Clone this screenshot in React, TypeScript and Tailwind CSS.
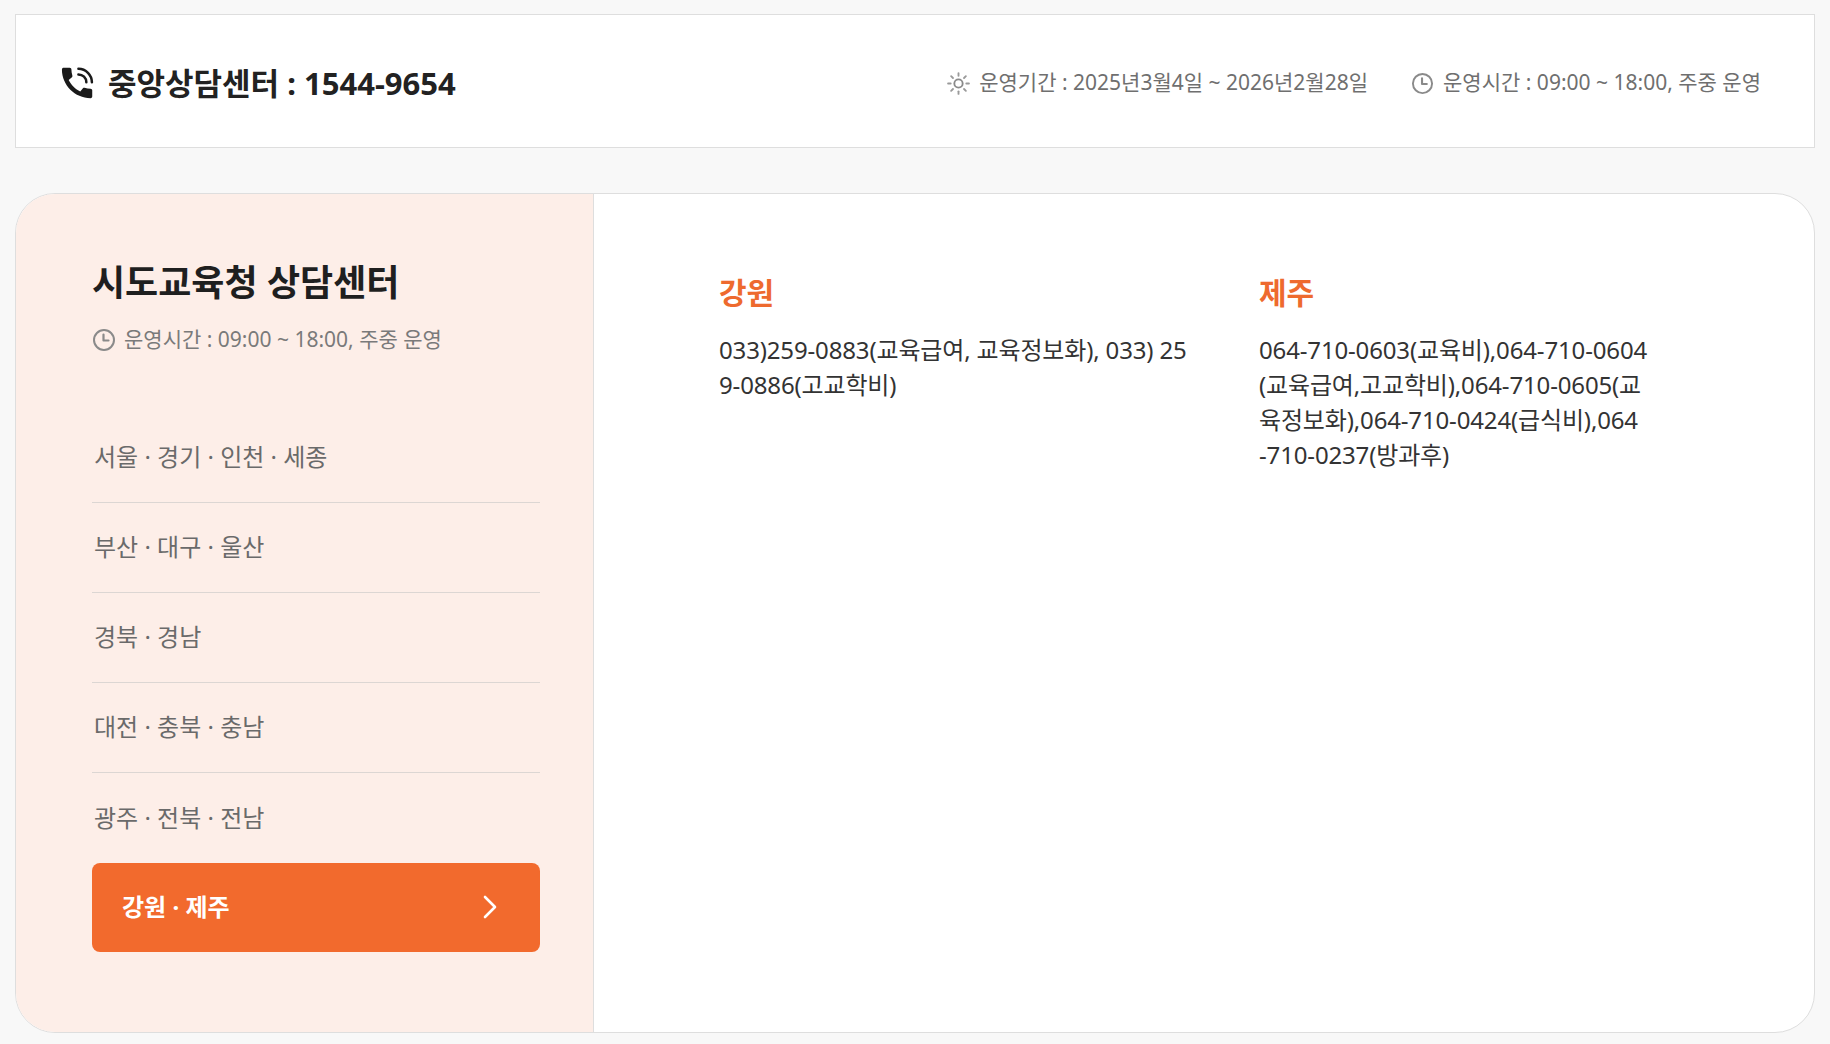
import React from "react";

function PhoneIcon() {
  return (
    <svg width="33" height="32" viewBox="2.5 2.5 19.5 19" aria-hidden="true">
      <path
        fill="#1a1a1a"
        d="M20.01 15.38c-1.23 0-2.42-.2-3.530-.56-.35-.12-.74-.03-1.01.24l-1.57 1.97c-2.83-1.35-5.48-3.9-6.890-6.83l1.950-1.66c.27-.28.35-.67.24-1.020-.37-1.11-.56-2.3-.56-3.53 0-.54-.45-.99-.99-.99H4.19C3.65 3 3 3.24 3 3.990 3 13.28 10.73 21 20.01 21c.71 0 .99-.63.99-1.18v-3.45c0-.54-.45-.99-.99-.99z"
      />
      <path d="M12.8 3.6a8 8 0 0 1 8 8" fill="none" stroke="#1a1a1a" strokeWidth="1.5" strokeLinecap="round" />
      <path d="M12.8 6.9a4.7 4.7 0 0 1 4.7 4.7" fill="none" stroke="#1a1a1a" strokeWidth="1.5" strokeLinecap="round" />
    </svg>
  );
}

function SunIcon() {
  const rays = [0, 45, 90, 135, 180, 225, 270, 315];
  return (
    <svg width="25" height="25" viewBox="0 0 24 24" aria-hidden="true">
      <circle cx="12" cy="12" r="4" fill="none" stroke="#8a8a8a" strokeWidth="1.8" />
      {rays.map((a) => (
        <line
          key={a}
          x1="12"
          y1="2"
          x2="12"
          y2="4.5"
          stroke="#9a9a9a"
          strokeWidth="1.8"
          strokeLinecap="round"
          transform={`rotate(${a} 12 12)`}
        />
      ))}
    </svg>
  );
}

function ClockIcon({ size = 24 }: { size?: number }) {
  return (
    <svg width={size} height={size} viewBox="0 0 24 24" aria-hidden="true">
      <circle cx="12" cy="12" r="10" fill="none" stroke="#8a8a8a" strokeWidth="2" />
      <path d="M11.5 6.5v6h5" fill="none" stroke="#8a8a8a" strokeWidth="2.2" strokeLinecap="round" strokeLinejoin="round" />
    </svg>
  );
}

function Chevron() {
  return (
    <svg width="16" height="26" viewBox="0 0 16 26" aria-hidden="true">
      <path d="M3 3l10 10-10 10" fill="none" stroke="#ffffff" strokeWidth="2.6" strokeLinecap="round" strokeLinejoin="round" />
    </svg>
  );
}

const regions = [
  "서울 · 경기 · 인천 · 세종",
  "부산 · 대구 · 울산",
  "경북 · 경남",
  "대전 · 충북 · 충남",
  "광주 · 전북 · 전남",
];

const centers = [
  {
    name: "강원",
    lines: ["033)259-0883(교육급여, 교육정보화), 033) 25", "9-0886(고교학비)"],
  },
  {
    name: "제주",
    lines: [
      "064-710-0603(교육비),064-710-0604",
      "(교육급여,고교학비),064-710-0605(교",
      "육정보화),064-710-0424(급식비),064",
      "-710-0237(방과후)",
    ],
  },
];

export default function App() {
  return (
    <div className="min-h-screen bg-[#f8f8f8] px-[15px] pt-[14px] font-['Noto_Sans','Noto_Sans_CJK_KR',sans-serif]">
      <header className="flex h-[134px] items-center justify-between border border-[#dedede] bg-white pl-[45px] pr-[53px] pt-[4px]">
        <div className="flex items-center gap-[14px]">
          <PhoneIcon />
          <span className="text-[31px] font-bold text-[#222222]">중앙상담센터 : 1544-9654</span>
        </div>
        <div className="flex items-center gap-[43px] text-[21px] text-[#6f6f6f]">
          <span className="flex items-center gap-[8px]">
            <SunIcon />
            운영기간 : 2025년3월4일 ~ 2026년2월28일
          </span>
          <span className="flex items-center gap-[9px]">
            <ClockIcon size={23} />
            운영시간 : 09:00 ~ 18:00, 주중 운영
          </span>
        </div>
      </header>

      <main className="mt-[45px] flex h-[840px] overflow-hidden rounded-[40px] border border-[#dedede] bg-white">
        <aside className="w-[578px] shrink-0 border-r border-[#dedede] bg-[#fdeee8] pl-[76px] pr-[53px] pt-[66px]">
          <h1 className="text-[36px] font-bold leading-[1.3] text-[#1f1f1f]">시도교육청 상담센터</h1>
          <div className="mt-[17px] flex h-[32px] items-center gap-[8px] text-[21px] text-[#7a7a7a]">
            <ClockIcon size={24} />
            운영시간 : 09:00 ~ 18:00, 주중 운영
          </div>
          <ul className="mt-[57px]">
            {regions.map((r, i) => (
              <li
                key={r}
                className={`flex h-[90px] items-center px-[2px] text-[24px] text-[#6a6a6a] ${
                  i < regions.length - 1 ? "border-b border-[#dcd6d3]" : ""
                }`}
              >
                {r}
              </li>
            ))}
          </ul>
          <button className="flex h-[89px] w-full items-center justify-between rounded-[8px] bg-[#f26a2d] pl-[30px] pr-[42px] text-[24px] font-bold text-white">
            <span>강원 · 제주</span>
            <Chevron />
          </button>
        </aside>

        <section className="flex flex-1 items-start pl-[125px] pt-[78px]">
          {centers.map((c, i) => (
            <div key={c.name} className={i === 0 ? "w-[540px] shrink-0" : "flex-1"}>
              <h2 className="text-[30px] font-bold leading-[1.4] text-[#ee6a2e]">{c.name}</h2>
              <div className="mt-[18px] text-[24px] leading-[35px] tracking-[-0.15px] text-[#333333]">
                {c.lines.map((l) => (
                  <span key={l} className="block whitespace-nowrap">
                    {l}
                  </span>
                ))}
              </div>
            </div>
          ))}
        </section>
      </main>
    </div>
  );
}
